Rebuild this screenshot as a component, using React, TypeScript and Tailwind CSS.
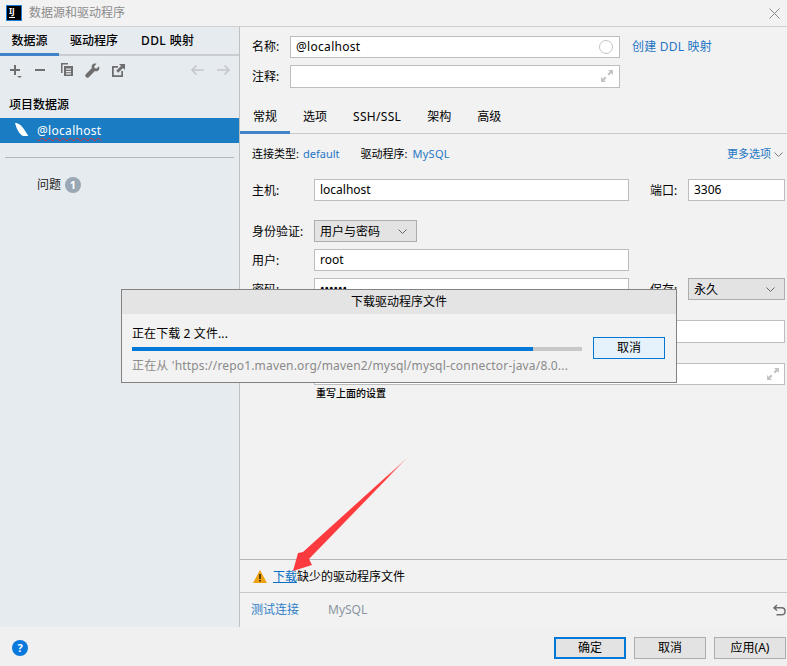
const font = "font-['Noto_Sans','Noto_Sans_CJK_SC',sans-serif]";

function Input({ value, className = "" }: { value?: string; className?: string }) {
  return (
    <div className={"relative h-[22px] border border-[#bdbdbd] bg-white pl-[5px] text-[12px] leading-[20px] text-black " + className}>
      {value}
    </div>
  );
}

function Select({ value, className = "" }: { value: string; className?: string }) {
  return (
    <div className={"flex h-[22px] items-center justify-between border border-[#adadad] bg-[#e3e3e3] pl-[5px] pr-[9px] pt-[1px] text-[12px] text-black " + className}>
      {value}
      <svg width="9" height="5" viewBox="0 0 9 5" fill="none" stroke="#666">
        <path d="M0.5 0.5 L4.5 4.5 L8.5 0.5" />
      </svg>
    </div>
  );
}

function ExpandIcon({ className = "" }: { className?: string }) {
  return (
    <svg className={"absolute " + className} width="12" height="12" viewBox="0 0 12 12" fill="#c4c4c4">
      <path d="M7 0H12V5L10.3 3.3L8 5.6L6.4 4L8.7 1.7Z" />
      <path d="M5 12H0V7L1.7 8.7L4 6.4L5.6 8L3.3 10.3Z" />
    </svg>
  );
}

function Label({ children, className = "" }: { children: string; className?: string }) {
  return <span className={"shrink-0 text-[12px] text-black " + className}>{children}</span>;
}

function Toolbar() {
  return (
    <div className="mt-[6px] flex h-[16px] items-center pl-[9px]">
      <svg width="16" height="16" viewBox="0 0 16 16" fill="#6e6e6e">
        <path d="M5 3H7V7H11V9H7V13H5V9H1V7H5Z" />
        <path d="M8 14H13L10.5 16Z" />
      </svg>
      <svg className="ml-[9px]" width="12" height="16" viewBox="0 0 12 16" fill="#6e6e6e">
        <path d="M1 7H11V9H1Z" />
      </svg>
      <svg className="ml-[14px]" width="14" height="14" viewBox="0 0 14 14" fill="#6e6e6e">
        <path d="M1 0H8V1.5H2.5V10H1Z" />
        <path d="M4 3H13V13H4ZM6 5.5V6.7H11V5.5ZM6 8V9.2H11V8ZM6 10.3V11.5H11V10.3Z" fillRule="evenodd" />
      </svg>
      <svg className="ml-[11px]" width="15" height="15" viewBox="0 0 15 15" fill="#6e6e6e">
        <path d="M14 3.2L11.6 5.6L9.6 5.2L9.2 3.2L11.6 0.8C9.8 0 7.8 0.6 7 2.2C6.5 3.2 6.5 4.2 6.9 5.1L0.8 11.2C0.1 11.9 0.1 13 0.8 13.7L1.3 14.2C2 14.9 3.1 14.9 3.8 14.2L9.9 8.1C10.8 8.5 11.9 8.4 12.8 7.9C14.3 7 14.8 5 14 3.2Z" />
      </svg>
      <svg className="ml-[12px]" width="13" height="13" viewBox="0 0 13 13" fill="#6e6e6e">
        <path d="M0 2H6V3.7H1.8V11.2H9.3V7H11V13H0Z" />
        <path d="M7 0H13V6L11 4L6.2 8.8L4.2 6.8L9 2Z" />
      </svg>
      <div className="flex-1" />
      <svg width="14" height="12" viewBox="0 0 14 12" fill="none" stroke="#c3c7cb" strokeWidth="1.6">
        <path d="M14 6H2M6.5 1.5L2 6L6.5 10.5" />
      </svg>
      <svg className="ml-[13px] mr-[8px]" width="14" height="12" viewBox="0 0 14 12" fill="none" stroke="#c3c7cb" strokeWidth="1.6">
        <path d="M0 6H12M7.5 1.5L12 6L7.5 10.5" />
      </svg>
    </div>
  );
}

function Sidebar() {
  return (
    <aside className="flex w-[240px] shrink-0 flex-col border-r border-[#bfbfbf] bg-[#e6ebf0]">
      <div className="flex h-[29px] border-b-2 border-[#c9cdd1] pt-[1px] text-[12px] font-medium text-black">
        <div className="-mb-[2px] flex w-[59px] items-center justify-center border-b-[3px] border-[#4083c9]">数据源</div>
        <div className="ml-[11px] flex items-center">驱动程序</div>
        <div className="ml-[23px] flex items-center tracking-[0.4px]">DDL 映射</div>
      </div>
      <Toolbar />
      <div className="mt-[18px] h-[18px] pl-[9px] text-[12px] font-medium leading-[18px] text-black">项目数据源</div>
      <div className="mt-[4px] flex h-[25px] items-center bg-[#1a7dc4] pl-[15px] text-[12px] text-white">
        <svg width="14" height="15" viewBox="0 0 14 15" fill="#ffffff">
          <path d="M0 0C2 0 3.5 0.5 5 1.7C7 3.2 8.5 5.5 10 7.7L13.3 13L8.3 13C6.5 12.2 5.2 11 4.3 9.7C3.2 8.2 2.6 6.8 1.7 5.3Z" />
        </svg>
        <span className="ml-[8px] tracking-[0.3px] underline decoration-[#e02b2b] decoration-wavy decoration-1 underline-offset-2">@localhost</span>
      </div>
      <div className="mx-[5px] mt-[14px] h-px bg-[#b5b8bb]" />
      <div className="mt-[18px] flex items-center pl-[37px] text-[12px] text-[#222]">
        问题
        <span className="ml-[4px] flex h-[16px] w-[16px] items-center justify-center rounded-full bg-[#9aa7b4] text-[11px] font-bold text-white">1</span>
      </div>
    </aside>
  );
}

function FormPanel() {
  return (
    <section className="flex min-w-0 flex-1 flex-col">
      <div className="flex-1 pt-[9px]">
        <div className="flex items-center pl-[12px]">
          <Label className="w-[38px]">名称:</Label>
          <div className="relative h-[22px] w-[330px] border border-[#bdbdbd] bg-white pl-[5px] text-[12px] leading-[20px] tracking-[0.3px] text-black">
            @localhost
            <div className="absolute right-[6px] top-[3px] h-[14px] w-[14px] rounded-full border border-[#c4c4c4]" />
          </div>
          <span className="ml-[12px] text-[12px] tracking-[0.2px] text-[#1e76c4]">创建 DDL 映射</span>
        </div>
        <div className="mt-[7px] flex items-center pl-[12px]">
          <Label className="w-[38px]">注释:</Label>
          <div className="relative h-[23px] w-[330px] border border-[#bdbdbd] bg-white">
            <ExpandIcon className="right-[6px] top-[4px]" />
          </div>
        </div>

        <div className="mt-[17px] flex h-[29px] gap-[26px] border-b border-[#c9c9c9] pl-[13px] text-[12px] text-black">
          <div className="relative flex items-center pb-[4px]">
            常规
            <div className="absolute -bottom-px -left-[13px] -right-[13px] h-[3px] bg-[#4083c9]" />
          </div>
          <div className="flex items-center pb-[4px]">选项</div>
          <div className="flex items-center pb-[4px] tracking-[0.3px]">SSH/SSL</div>
          <div className="flex items-center pb-[4px]">架构</div>
          <div className="flex items-center pb-[4px]">高级</div>
        </div>

        <div className="mt-[11px] flex h-[18px] items-center pl-[12px] pr-[4px] text-[11px]">
          <span className="text-black">连接类型:</span>
          <span className="ml-[4px] text-[#1e76c4]">default</span>
          <span className="ml-[21px] text-black">驱动程序:</span>
          <span className="ml-[5px] tracking-[0.3px] text-[#1e76c4]">MySQL</span>
          <span className="ml-auto text-[#1e76c4]">更多选项</span>
          <svg className="ml-[3px]" width="9" height="5" viewBox="0 0 9 5" fill="none" stroke="#7a7a7a">
            <path d="M0.5 0.5 L4.5 4.5 L8.5 0.5" />
          </svg>
        </div>

        <div className="mt-[16px] flex items-center pl-[12px]">
          <Label className="w-[62px] pt-[2px]">主机:</Label>
          <Input value="localhost" className="w-[315px]" />
          <Label className="ml-[21px] w-[38px] pt-[2px]">端口:</Label>
          <Input value="3306" className="w-[97px]" />
        </div>
        <div className="mt-[19px] flex items-center pl-[12px]">
          <Label className="w-[62px] pt-[2px]">身份验证:</Label>
          <Select value="用户与密码" className="w-[103px]" />
        </div>
        <div className="mt-[7px] flex items-center pl-[12px]">
          <Label className="w-[62px] pt-[2px]">用户:</Label>
          <Input value="root" className="w-[315px]" />
        </div>
        <div className="mt-[7px] flex items-center pl-[12px]">
          <Label className="w-[62px] pt-[2px]">密码:</Label>
          <Input value="••••••" className="w-[315px]" />
          <Label className="ml-[21px] w-[38px] pt-[2px]">保存:</Label>
          <Select value="永久" className="w-[97px]" />
        </div>
        <div className="mt-[20px] pl-[74px]">
          <Input className="h-[23px] w-[471px]" />
        </div>
        <div className="mt-[20px] pl-[74px]">
          <div className="relative w-[471px]">
            <Input />
            <ExpandIcon className="right-[6px] top-[5px]" />
          </div>
        </div>
        <div className="mt-[1px] pl-[76px] text-[10px] font-medium leading-[14px] text-black">重写上面的设置</div>
      </div>

      <div className="flex h-[33px] items-center border-t border-[#b5b5b5] pl-[13px] pt-[1px] text-[12px] text-black">
        <svg width="14" height="13" viewBox="0 0 14 13">
          <path d="M7 0L14 13H0Z" fill="#eda20f" />
          <path d="M6.2 4H7.8V9H6.2ZM6.2 10H7.8V11.5H6.2Z" fill="#3a2a00" />
        </svg>
        <span className="ml-[6px] text-[#0a6fc2] underline">下载</span>
        <span>缺少的驱动程序文件</span>
      </div>
      <div className="flex h-[35px] items-center justify-between border-t border-[#c9c9c9] pl-[11px] pr-[1px] text-[12px]">
        <div className="flex items-center">
          <span className="text-[#2f80c8]">测试连接</span>
          <span className="ml-[29px] text-[#8b95a0]">MySQL</span>
        </div>
        <svg width="13" height="12" viewBox="0 0 13 12" fill="none" stroke="#6e6e6e" strokeWidth="1.5">
          <path d="M4 1L1 3.8L4 6.5M1 3.8H8.5C10.5 3.8 12 5.2 12 7.2C12 9.2 10.5 10.8 8.5 10.8H3.5" />
        </svg>
      </div>
    </section>
  );
}

function Button({ children, primary }: { children: string; primary?: boolean }) {
  return (
    <div
      className={
        "flex h-[22px] w-[72px] items-center justify-center bg-[#e3e3e3] text-[12px] text-black " +
        (primary ? "border-2 border-[#0078d7]" : "border border-[#adadad]")
      }
    >
      {children}
    </div>
  );
}

function DownloadDialog() {
  return (
    <div className="absolute left-[121px] top-[289px] w-[556px] border border-[#828282] bg-[#f2f2f2]">
      <div className="flex h-[24px] items-center justify-center bg-[#e4e4e4] text-[12px] text-black">下载驱动程序文件</div>
      <div className="flex items-center pl-[10px]">
        <div className="w-[450px]">
          <div className="mt-[11px] h-[18px] text-[12px] leading-[18px] tracking-[0.1px] text-black">正在下载 2 文件...</div>
          <div className="mt-[4px] h-[4px] bg-[#c8c8c8]">
            <div className="h-full bg-[#0078d7]" style={{ width: "89%" }} />
          </div>
          <div className="mb-[7px] mt-[6px] h-[18px] whitespace-nowrap text-[12px] leading-[18px] tracking-[0.17px] text-[#8a8a8a]">
            正在从 'https://repo1.maven.org/maven2/mysql/mysql-connector-java/8.0...
          </div>
        </div>
        <div className="ml-[11px] flex h-[22px] w-[72px] items-center justify-center border border-[#0078d7] bg-[#e5f1fb] text-[12px] text-black">取消</div>
      </div>
    </div>
  );
}

export default function App() {
  return (
    <div className={"relative flex h-[666px] w-[787px] flex-col overflow-hidden bg-[#f2f2f2] " + font}>
      <header className="flex h-[27px] shrink-0 items-center border-b border-[#cfcfcf] pl-[6px] pr-[7px]">
        <div className="relative mb-[1px] h-[16px] w-[16px] border border-[#1a7dd8] bg-black">
          <span className="absolute left-[2px] top-[0px] text-[8px] font-bold leading-[9px] text-white">IJ</span>
          <div className="absolute bottom-[2px] left-[2px] h-px w-[6px] bg-white" />
        </div>
        <span className="ml-[7px] text-[12px] text-[#8c8c8c]">数据源和驱动程序</span>
        <svg className="ml-auto" width="11" height="11" viewBox="0 0 11 11" stroke="#8a8a8a" fill="none">
          <path d="M0.5 0.5L10.5 10.5M10.5 0.5L0.5 10.5" />
        </svg>
      </header>

      <main className="flex min-h-0 flex-1">
        <Sidebar />
        <FormPanel />
      </main>

      <footer className="flex h-[39px] shrink-0 items-center bg-[#f0f0f0] pl-[12px] pr-[1px] pt-[3px]">
        <div className="flex h-[16px] w-[16px] items-center justify-center rounded-full bg-[#0a78dc] text-[11px] font-bold text-white">?</div>
        <div className="ml-auto flex items-center gap-[8px]">
          <Button primary>确定</Button>
          <Button>取消</Button>
          <Button>应用(A)</Button>
        </div>
      </footer>

      <DownloadDialog />

      <svg className="absolute left-[285px] top-[450px]" width="130" height="125" viewBox="285 450 130 125">
        <defs>
          <linearGradient id="arrowFade" x1="408" y1="457" x2="300" y2="560" gradientUnits="userSpaceOnUse">
            <stop offset="0" stopColor="#ff8a8a" stopOpacity="0.6" />
            <stop offset="0.2" stopColor="#ff3d3d" />
            <stop offset="1" stopColor="#fb3a3f" />
          </linearGradient>
        </defs>
        <path d="M408 457L309 559L312 565L293 571L298 553L303 552Z" fill="url(#arrowFade)" />
      </svg>
    </div>
  );
}
